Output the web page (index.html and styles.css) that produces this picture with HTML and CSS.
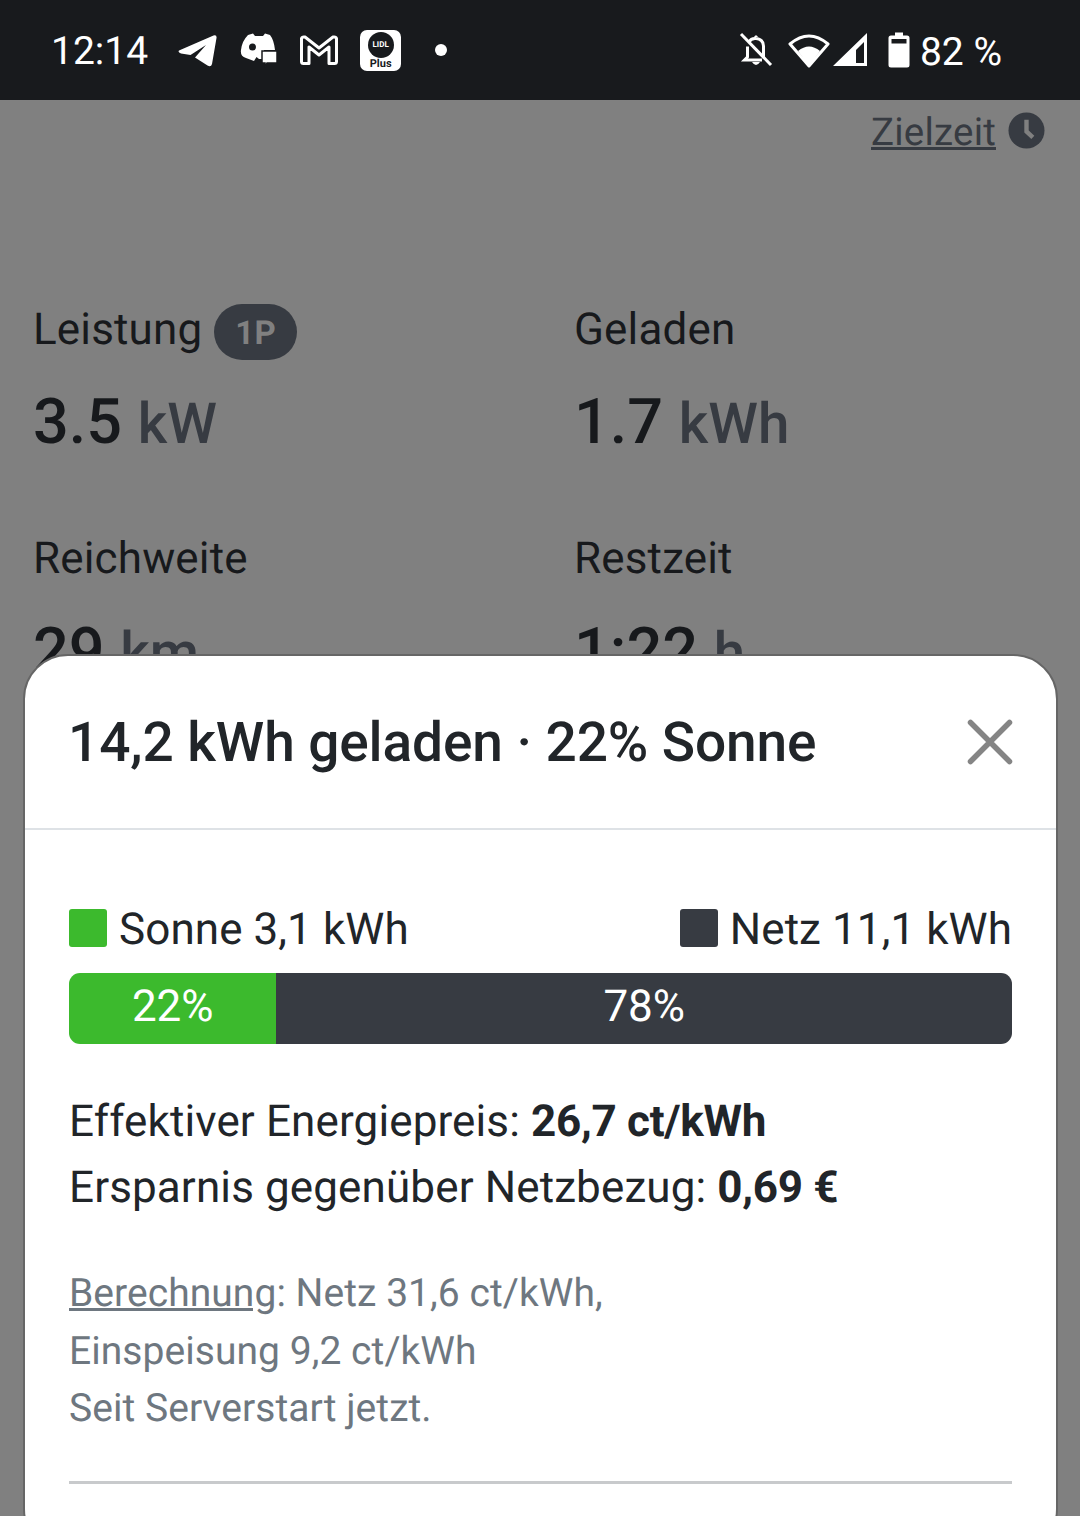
FILE: index.html
```html
<!DOCTYPE html>
<html lang="de">
<head>
  <meta charset="UTF-8">
  <title>Ladevorgang</title>
  <link rel="stylesheet" href="styles.css">
</head>
<body>

  <!-- Android status bar -->
  <div class="statusbar">
    <div class="status-left">
      <span class="clock">12:14</span>
      <svg class="ic-telegram" width="40" height="36" viewBox="0 0 40 36"><path d="M1 18.500 35.500 3.500Q39 2.500 38.500 6L34 32Q33 35.500 29.500 33.500L17 25.500 28 13 12.500 23 3 21.500Q-.5 20 1 18.500Z" fill="#fff"/></svg>
      <svg class="ic-discord" width="38" height="36" viewBox="0 0 38 36"><path d="M8 3 13 1.500 15 4H23L25 1.500 30 3Q34 8 35 18H24V27H19L16.500 25 14 29 6 26Q0 24 1 18 2 9 8 3Z" fill="#fff"/><circle cx="12.500" cy="15" r="3.500" fill="#181a1d"/><path d="M22 19H37V31H27L25 35V31H22Z" fill="#fff" stroke="#181a1d" stroke-width="1.500"/></svg>
      <svg class="ic-gmail" width="40" height="32" viewBox="0 0 40 32"><path d="M2.500 4.500Q3 2.500 6 3L20 14 34 3Q37 2.500 37.500 4.500V27.500Q37.500 29.500 35.500 29.500H30V13L20 21 10 13V29.500H4.500Q2.500 29.500 2.500 27.500Z" fill="none" stroke="#fff" stroke-width="3" stroke-linejoin="round"/></svg>
      <div class="lidl">
        <div class="lidl-disc">LIDL</div>
        <div class="lidl-plus">Plus</div>
      </div>
      <span class="dot"></span>
    </div>
    <div class="status-right">
      <svg class="ic-bell" width="34" height="36" viewBox="0 0 34 36"><path d="M10 10Q12 6 17 6.500 24 7 24.500 14V25M8.500 14.500V25L5.500 28H23" fill="none" stroke="#fff" stroke-width="3"/><path d="M15 5Q17 1.500 19 5ZM13 30H21Q17 36 13 30Z" fill="#fff"/><path d="M2 2 32 33" stroke="#fff" stroke-width="3"/></svg>
      <svg class="ic-wifi" width="42" height="36" viewBox="0 0 42 36"><path d="M21 34 2 12Q21-4 40 12Z" fill="none" stroke="#fff" stroke-width="3" stroke-linejoin="round"/><path d="M21 34 10 19Q21 10 32 19Z" fill="#fff"/></svg>
      <svg class="ic-signal" width="36" height="36" viewBox="0 0 36 36"><path d="M35 1V34H1ZM32 10 24 18V31H32Z" fill="#fff" fill-rule="evenodd"/></svg>
      <svg class="ic-battery" width="22" height="36" viewBox="0 0 22 36"><path d="M7 .5H15V3.500H19Q21.500 3.500 21.500 6V33Q21.500 35.500 19 35.500H3Q.5 35.500 .5 33V6Q.5 3.500 3 3.500H7ZM3.500 7V11.500H18.500V7Z" fill="#fff" fill-rule="evenodd"/></svg>
      <span class="battery-text">82 %</span>
    </div>
  </div>

  <!-- Loadpoint behind the dialog -->
  <div class="page">
    <div class="target">
      <span class="target-link">Zielzeit</span>
      <svg class="ic-clock" width="37" height="37" viewBox="0 0 38 38"><circle cx="19" cy="19" r="18.500" fill="#373b42"/><path d="M19 8V20L25.500 26" fill="none" stroke="#808080" stroke-width="4.500"/></svg>
    </div>
    <div class="stats">
      <div class="stat">
        <div class="stat-label">Leistung <span class="phase">1P</span></div>
        <div class="stat-value">3.5 <span class="unit">kW</span></div>
      </div>
      <div class="stat">
        <div class="stat-label">Geladen</div>
        <div class="stat-value">1.7 <span class="unit">kWh</span></div>
      </div>
      <div class="stat">
        <div class="stat-label">Reichweite</div>
        <div class="stat-value">29 <span class="unit">km</span></div>
      </div>
      <div class="stat">
        <div class="stat-label">Restzeit</div>
        <div class="stat-value">1:22 <span class="unit">h</span></div>
      </div>
    </div>
  </div>

  <!-- Dialog -->
  <div class="modal">
    <div class="modal-header">
      <h2>14,2 kWh geladen · 22% Sonne</h2>
      <svg class="ic-close" width="46" height="46" viewBox="0 0 46 46"><path d="M3.500 3.500 42.500 42.500M42.500 3.500 3.500 42.500" stroke="#858585" stroke-width="5.500" stroke-linecap="round"/></svg>
    </div>
    <div class="modal-body">
      <div class="legend">
        <span class="legend-item"><span class="swatch swatch-sun"></span>Sonne 3,1 kWh</span>
        <span class="legend-item"><span class="swatch swatch-grid"></span>Netz 11,1 kWh</span>
      </div>
      <div class="bar">
        <div class="bar-sun">22%</div>
        <div class="bar-grid">78%</div>
      </div>
      <p class="summary">Effektiver Energiepreis: <strong>26,7 ct/kWh</strong><br>Ersparnis gegenüber Netzbezug: <strong>0,69 €</strong></p>
      <p class="calc"><span class="calc-link">Berechnung</span>: Netz 31,6 ct/kWh,<br>Einspeisung 9,2 ct/kWh<br>Seit Serverstart jetzt.</p>
      <hr class="divider">
    </div>
  </div>

</body>
</html>
```
FILE: styles.css
```css
html, body {
  margin: 0;
  height: 1516px;
  overflow: hidden;
}
body {
  font-family: Roboto, sans-serif;
  background-color: #808080;
  color: #101214;
  text-rendering: geometricPrecision;
  font-variant-ligatures: none;
}

.statusbar {
  height: 100px;
  box-sizing: border-box;
  padding: 0 78px 0 51px;
  background-color: #181a1d;
  color: #fff;
  display: flex;
  justify-content: space-between;
  align-items: center;
}
.status-left, .status-right {
  display: flex;
  align-items: center;
}
.clock {
  font-size: 39px;
  margin-top: 2px;
  margin-right: 30px;
}
.ic-telegram { margin-right: 22px; }
.ic-discord { margin-right: 21px; }
.ic-gmail { margin-right: 21px; }
.lidl {
  width: 41px;
  height: 41px;
  box-sizing: border-box;
  padding-top: 2px;
  background: #fff;
  border-radius: 7px;
  display: flex;
  flex-direction: column;
  align-items: center;
}
.lidl-disc {
  width: 26px;
  height: 26px;
  border-radius: 50%;
  background: #181a1d;
  color: #fff;
  font-size: 8px;
  font-weight: 700;
  line-height: 26px;
  text-align: center;
}
.lidl-plus {
  color: #181a1d;
  font-size: 11px;
  font-weight: 700;
  line-height: 12px;
}
.dot {
  width: 12px;
  height: 12px;
  border-radius: 50%;
  background: #fff;
  margin-left: 34px;
}
.ic-bell { margin-right: 15px; }
.ic-wifi { margin-right: 2px; }
.ic-signal { margin-right: 20px; }
.ic-battery { margin-right: 10px; }
.battery-text {
  font-size: 39px;
  margin-top: 4px;
}

.page {
  padding: 0 34px 0 33px;
}
.target {
  height: 64px;
  display: flex;
  justify-content: flex-end;
  align-items: center;
  gap: 12px;
  color: #373b42;
  font-size: 38.500px;
  letter-spacing: .2px;
}
.target-link { text-decoration: underline; }
.ic-clock {
  margin-right: 1px;
  margin-bottom: 3px;
}
.stats {
  margin-top: 137px;
  display: grid;
  grid-template-columns: 541px 1fr;
  row-gap: 63px;
}
.stat-label {
  height: 56px;
  display: flex;
  align-items: center;
  gap: 12px;
  font-size: 44px;
  letter-spacing: .15px;
  color: #17191c;
}
.phase {
  margin-top: 6px;
  height: 56px;
  background: #373b42;
  color: #808080;
  font-size: 33px;
  font-weight: 700;
  line-height: 59px;
  padding: 0 21px;
  border-radius: 28px;
}
.stat-value {
  margin-top: 23px;
  font-size: 63px;
  font-weight: 500;
  line-height: 86px;
  color: #17191c;
}
.unit {
  font-size: 56.500px;
  color: #373b42;
}

.modal {
  position: absolute;
  left: 23px;
  top: 654px;
  width: 1035px;
  height: 900px;
  box-sizing: border-box;
  background: #fff;
  border: 2px solid #666;
  border-radius: 45px;
}
.modal-header {
  height: 174px;
  box-sizing: border-box;
  padding: 2px 43px 0 43px;
  border-bottom: 2px solid #dee2e6;
  display: flex;
  justify-content: space-between;
  align-items: center;
}
.modal-header h2 {
  margin: 0;
  font-size: 55px;
  font-weight: 500;
  letter-spacing: -.1px;
  color: #212529;
}
.ic-close { margin-bottom: 2px; }
.modal-body {
  padding: 73px 44px 0;
}
.legend {
  display: flex;
  justify-content: space-between;
  font-size: 44px;
  line-height: 52px;
  letter-spacing: .08px;
  color: #212529;
}
.legend-item {
  display: flex;
  align-items: center;
  gap: 12px;
}
.swatch {
  width: 38px;
  height: 38px;
  margin-bottom: 2px;
  border-radius: 3px;
}
.swatch-sun { background: #3cba2d; }
.swatch-grid { background: #373b42; }
.bar {
  margin-top: 18px;
  height: 71px;
  border-radius: 11px;
  overflow: hidden;
  display: flex;
  color: #fff;
  font-size: 44px;
  line-height: 67px;
  text-align: center;
}
.bar-sun {
  width: 22%;
  background: #3cba2d;
}
.bar-grid {
  flex: 1;
  background: #373b42;
}
.summary {
  margin: 44px 0 0;
  font-size: 44px;
  line-height: 66px;
  letter-spacing: .12px;
  color: #212529;
}
.summary strong {
  font-weight: 700;
  letter-spacing: -.3px;
}
.calc {
  margin: 45px 0 0;
  font-size: 39px;
  line-height: 57.500px;
  letter-spacing: .05px;
  color: #6e7780;
}
.calc-link { text-decoration: underline; }
.divider {
  margin: 43px 0 0;
  border: 0;
  border-top: 3px solid #c8cacc;
}
```
